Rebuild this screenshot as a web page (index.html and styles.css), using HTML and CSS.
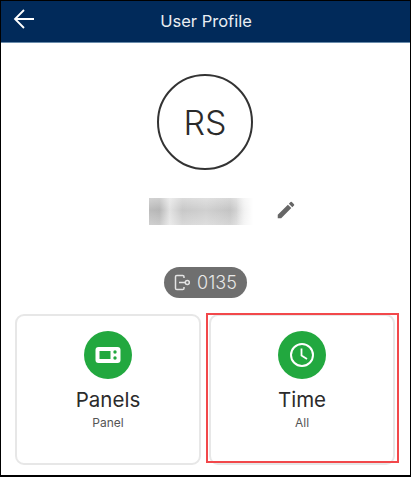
FILE: index.html
```html
<!DOCTYPE html>
<html lang="en">
<head>
    <meta charset="UTF-8">
    <meta name="viewport" content="width=device-width, initial-scale=1.0">
    <title>User Profile</title>
    <link rel="stylesheet" href="styles.css">
</head>
<body>
    <div class="frame">
        <header class="topbar">
            <svg class="back" width="22" height="20" viewBox="0 0 22 20" fill="none" stroke="#fff" stroke-width="1.8">
                <path d="M11 1L2 10l9 9M2 10h19"/>
            </svg>
            <h1>User Profile</h1>
        </header>
        <main class="profile">
            <div class="avatar">RS</div>
            <div class="name-row">
                <div class="name-blur"></div>
                <svg class="edit" width="22" height="22" viewBox="0 0 24 24" fill="#666">
                    <path d="M3 17.25V21h3.75L17.81 9.94l-3.75-3.75L3 17.25zM20.71 7.04a1 1 0 0 0 0-1.41l-2.34-2.34a1 1 0 0 0-1.41 0l-1.83 1.83 3.75 3.75 1.83-1.83z"/>
                </svg>
            </div>
            <div class="pill">
                <svg width="17" height="17" viewBox="0 0 17 17" fill="none" stroke="#e4e4e4" stroke-width="1.5">
                    <path d="M10 4V2.8A1.3 1.3 0 0 0 8.7 1.5H2.8A1.3 1.3 0 0 0 1.5 2.8v11.4a1.3 1.3 0 0 0 1.3 1.3h5.9a1.3 1.3 0 0 0 1.3-1.3V13"/>
                    <path d="M5 8.5h6"/>
                    <circle cx="13.3" cy="8.5" r="2"/>
                </svg>
                <span>0135</span>
            </div>
            <div class="cards">
                <div class="card">
                    <div class="card-icon">
                        <svg width="26" height="18" viewBox="0 0 26 18">
                            <rect x="0.5" y="1" width="25" height="16" rx="3" fill="#fff"/>
                            <rect x="4.5" y="5" width="11" height="8" fill="#22a83f"/>
                            <circle cx="20" cy="6" r="1.7" fill="#22a83f"/>
                            <circle cx="20" cy="12" r="1.7" fill="#22a83f"/>
                        </svg>
                    </div>
                    <div class="card-title">Panels</div>
                    <div class="card-sub">Panel</div>
                </div>
                <div class="card selected">
                    <div class="card-icon">
                        <svg width="26" height="26" viewBox="0 0 26 26" fill="none" stroke="#fff">
                            <circle cx="13" cy="13" r="11" stroke-width="2"/>
                            <path d="M12.5 6.5V13.5l5.5 3.5" stroke-width="1.8"/>
                        </svg>
                    </div>
                    <div class="card-title">Time</div>
                    <div class="card-sub">All</div>
                </div>
            </div>
        </main>
    </div>
</body>
</html>
```

FILE: styles.css
```css
* {
    box-sizing: border-box;
}
body {
    margin: 0;
    background: #fff;
    font-family: Inter, "Liberation Sans", sans-serif;
}
.frame {
    width: 411px;
    height: 477px;
    border: 1px solid #000;
    border-bottom-width: 2px;
    overflow: hidden;
}
.topbar {
    height: 42px;
    padding: 0 0 2px 1px;
    background: #012a5a;
    border-bottom: 1px solid #6a8cab;
    display: flex;
    align-items: center;
    justify-content: center;
    position: relative;
}
.topbar h1 {
    margin: 0;
    color: #e9eef3;
    font-size: 16.5px;
    font-weight: 400;
}
.back {
    position: absolute;
    left: 12px;
    top: 8px;
}
.profile {
    display: flex;
    flex-direction: column;
    align-items: center;
    padding-top: 31px;
}
.avatar {
    width: 96px;
    height: 96px;
    margin-right: 1px;
    border: 2px solid #333;
    border-radius: 50%;
    display: flex;
    align-items: center;
    justify-content: center;
    font-size: 34px;
    font-weight: 300;
    color: #2b2b2b;
}
.name-row {
    width: 100%;
    height: 27px;
    margin-top: 28px;
    padding-left: 148px;
    display: flex;
    align-items: center;
    gap: 22px;
}
.name-blur {
    width: 104px;
    height: 27px;
    background:
        linear-gradient(90deg, rgba(255,255,255,0) 0, rgba(255,255,255,0) 84%, #fff 100%),
        linear-gradient(180deg, rgba(255,255,255,0.35) 0, rgba(255,255,255,0) 45%, rgba(255,255,255,0.3) 100%),
        linear-gradient(90deg, #bcbcbc 0, #b6b6b6 10%, #e2e2e2 20%, #c8c8c8 32%, #d0d0d0 55%, #c4c4c4 78%, #e6e6e6 92%);
}
.edit {
    margin-top: -4px;
}
.pill {
    height: 31px;
    margin-top: 42px;
    padding: 0 10px 0 10px;
    border-radius: 16px;
    background: #6f6f6f;
    color: #e8e8e8;
    font-size: 18px;
    font-weight: 300;
    display: flex;
    align-items: center;
    gap: 6px;
}
.cards {
    width: 100%;
    margin-top: 16px;
    padding: 0 15px 0 14px;
    display: grid;
    grid-template-columns: 1fr 1fr;
    gap: 8px;
}
.card {
    height: 151px;
    border: 2px solid #e7e7e7;
    border-radius: 9px;
    padding-top: 15px;
    display: flex;
    flex-direction: column;
    align-items: center;
    position: relative;
}
.card.selected::after {
    content: "";
    position: absolute;
    top: -3px;
    left: -5px;
    right: -6px;
    bottom: 0;
    border: 2px solid #f2484b;
}
.card-icon {
    width: 48px;
    height: 48px;
    border-radius: 50%;
    background: #22a83f;
    display: flex;
    align-items: center;
    justify-content: center;
}
.card-title {
    margin-top: 7px;
    font-size: 20.5px;
    line-height: 28px;
    color: #2b2b2b;
}
.card-sub {
    font-size: 12px;
    line-height: 16px;
    margin-top: 1px;
    color: #555;
}
```
